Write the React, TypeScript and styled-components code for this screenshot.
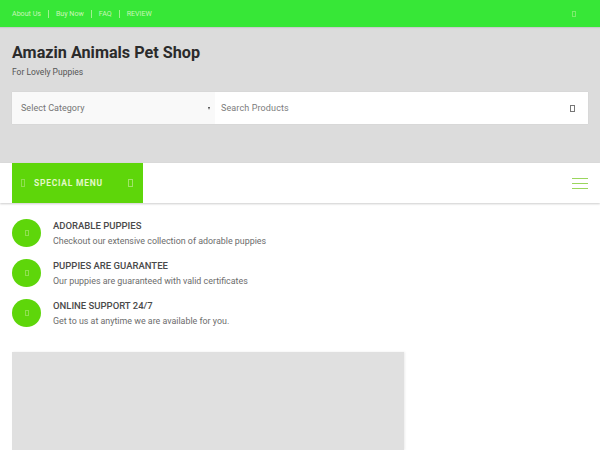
import React from "react";
import styled, { createGlobalStyle } from "styled-components";

const GlobalStyle = createGlobalStyle`
  html, body {
    margin: 0;
    padding: 0;
    height: 450px;
    overflow: hidden;
    background: #fff;
    font-family: Roboto, "Liberation Sans", sans-serif;
  }
  * { box-sizing: border-box; }
`;

const TopBar = styled.div`
  height: 27px;
  padding: 0 24px 0 12px;
  display: flex;
  align-items: center;
  justify-content: space-between;
  background: #37e737;
  box-shadow: 0 1px 1px rgba(0, 0, 0, 0.08);
  position: relative;
`;

const TopLinks = styled.div`
  display: flex;
  align-items: center;
  font-size: 7.1px;
  color: #c8f6b8;
  a + a {
    margin-left: 7px;
    padding-left: 7px;
    border-left: 1px solid #a0f090;
    line-height: 8px;
  }
`;

const Tofu = styled.span<{ $w?: number; $h?: number; $color?: string }>`
  display: inline-block;
  flex: none;
  width: ${(p) => p.$w ?? 4}px;
  height: ${(p) => p.$h ?? 6}px;
  border: 1px solid ${(p) => p.$color ?? "#7cec6c"};
`;

const Header = styled.div`
  height: 136px;
  padding: 16px 12px 0;
  background: #dcdcdc;
`;

const Title = styled.h1`
  margin: 0;
  font-size: 16.2px;
  line-height: 19px;
  font-weight: 700;
  color: #2b2b2b;
`;

const Tagline = styled.div`
  margin-top: 5px;
  font-size: 8.5px;
  line-height: 11px;
  color: #555;
`;

const SearchRow = styled.div`
  margin-top: 14px;
  height: 32px;
  display: flex;
  background: #fff;
  box-shadow: 0 0 1px rgba(0, 0, 0, 0.1);
`;

const CategoryBox = styled.div`
  width: 203px;
  padding: 0 5px 0 9px;
  display: flex;
  align-items: center;
  justify-content: space-between;
  background: #f9f9f9;
  font-size: 9px;
  letter-spacing: 0.03px;
  color: #757575;
`;

const Caret = styled.span`
  width: 0;
  height: 0;
  border-left: 1.5px solid transparent;
  border-right: 1.5px solid transparent;
  border-top: 3px solid #444;
`;

const SearchBox = styled.div`
  flex: 1;
  padding: 0 13px 0 6px;
  display: flex;
  align-items: center;
  justify-content: space-between;
  font-size: 9px;
  letter-spacing: 0.12px;
  color: #7c7c7c;
`;

const NavBar = styled.div`
  height: 40px;
  padding: 0 12px;
  display: flex;
  align-items: flex-start;
  justify-content: space-between;
  background: #fff;
  box-shadow: 0 1px 2px rgba(0, 0, 0, 0.2);
`;

const MenuButton = styled.div`
  width: 131px;
  height: 40px;
  padding: 0 10px 0 9px;
  display: flex;
  align-items: center;
  justify-content: space-between;
  background: #5ed60a;
  color: #e4f8c8;
  font-size: 8.5px;
  font-weight: 700;
  letter-spacing: 0.75px;
`;

const MenuLabel = styled.span`
  flex: 1;
  margin-left: 9px;
`;

const Burger = styled.div`
  width: 16px;
  margin: 15px 0 0;
  display: flex;
  flex-direction: column;
  gap: 4px;
  span {
    height: 1px;
    background: #9ad65c;
  }
`;

const Features = styled.div`
  padding: 16px 12px 0;
  display: flex;
  flex-direction: column;
  gap: 12px;
`;

const Feature = styled.div`
  height: 28px;
  display: flex;
  align-items: center;
  gap: 12px;
`;

const Circle = styled.div`
  width: 29px;
  height: 28px;
  border-radius: 50%;
  display: flex;
  align-items: center;
  justify-content: center;
  background: #5ed60a;
`;

const FeatureTitle = styled.div`
  font-size: 9.5px;
  line-height: 12px;
  font-weight: 500;
  color: #4a4a4a;
`;

const FeatureText = styled.div`
  margin-top: 4px;
  font-size: 8.9px;
  line-height: 11px;
  color: #6c6c6c;
`;

const ImageCard = styled.div`
  width: 392px;
  height: 98px;
  margin: 25px 0 0 12px;
  background: #e0e0e0;
  box-shadow: 1px 0 2px rgba(0, 0, 0, 0.08);
`;

const links = ["About Us", "Buy Now", "FAQ", "REVIEW"];

const features = [
  {
    title: "ADORABLE PUPPIES",
    text: "Checkout our extensive collection of adorable puppies",
  },
  {
    title: "PUPPIES ARE GUARANTEE",
    text: "Our puppies are guaranteed with valid certificates",
  },
  {
    title: "ONLINE SUPPORT 24/7",
    text: "Get to us at anytime we are available for you.",
  },
];

const App = () => {
  return (
    <>
      <GlobalStyle />
      <TopBar>
        <TopLinks>
          {links.map((l) => (
            <a key={l}>{l}</a>
          ))}
        </TopLinks>
        <Tofu $w={4} $h={6} />
      </TopBar>
      <Header>
        <Title>Amazin Animals Pet Shop</Title>
        <Tagline>For Lovely Puppies</Tagline>
        <SearchRow>
          <CategoryBox>
            Select Category
            <Caret />
          </CategoryBox>
          <SearchBox>
            Search Products
            <Tofu $w={5} $h={7} $color="#777" />
          </SearchBox>
        </SearchRow>
      </Header>
      <NavBar>
        <MenuButton>
          <Tofu $w={4} $h={8} $color="#8fe050" />
          <MenuLabel>SPECIAL MENU</MenuLabel>
          <Tofu $w={5} $h={8} $color="#a0e468" />
        </MenuButton>
        <Burger>
          <span />
          <span />
          <span />
        </Burger>
      </NavBar>
      <Features>
        {features.map((f) => (
          <Feature key={f.title}>
            <Circle>
              <Tofu $w={4} $h={6} $color="#8fe050" />
            </Circle>
            <div>
              <FeatureTitle>{f.title}</FeatureTitle>
              <FeatureText>{f.text}</FeatureText>
            </div>
          </Feature>
        ))}
      </Features>
      <ImageCard />
    </>
  );
};

export default App;
